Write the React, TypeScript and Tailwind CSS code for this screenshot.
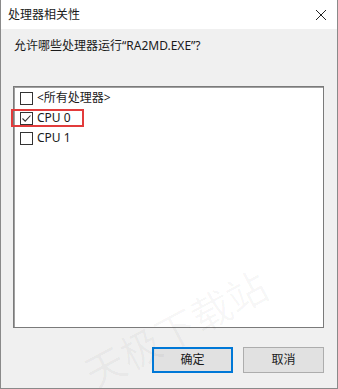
import { useState } from "react";

const processors = [
  { label: "<所有处理器>", checked: false },
  { label: "CPU 0", checked: true },
  { label: "CPU 1", checked: false },
];

const font = { fontFamily: '"Noto Sans", "Noto Sans CJK SC", sans-serif' };

const Checkbox = ({ checked }: { checked: boolean }) => (
  <span className="w-[13px] h-[13px] border border-[#333333] bg-white flex items-center justify-center shrink-0">
    {checked && (
      <svg width="11" height="11" viewBox="0 0 11 11" fill="none">
        <path d="M1.5 5.5 4.2 8.2 9.5 2.5" stroke="#333333" strokeWidth="1.1" />
      </svg>
    )}
  </span>
);

const App = () => {
  const [items, setItems] = useState(processors);

  const toggle = (i: number) =>
    setItems(items.map((it, idx) => (idx === i ? { ...it, checked: !it.checked } : it)));

  return (
    <div
      className="relative w-[338px] h-[389px] flex flex-col border-x border-b border-[#8a8a8a] overflow-hidden text-[12px] text-[#1a1a1a]"
      style={font}
    >
      {/* title bar */}
      <div className="h-[29px] bg-white flex items-center justify-between pl-[7px] pr-[10px] shrink-0">
        <span className="leading-4">处理器相关性</span>
        <svg width="12" height="12" viewBox="0 0 12 12" fill="none">
          <path d="M1 1 11 11M11 1 1 11" stroke="#222222" strokeWidth="1" />
        </svg>
      </div>

      <div className="flex-1 bg-[#f0f0f0] flex flex-col pt-[9px] pl-[12px] pr-[13px] pb-[15px]">
        <p className="leading-4 pl-[1px]">允许哪些处理器运行“RA2MD.EXE”?</p>

        <div className="mt-[32px] h-[242px] bg-white border border-[#7a7a7a] shadow-[inset_1px_1px_0_#a0a0a0] pt-[1px] pl-[6px]">
          {items.map((it, i) => (
            <div key={i} className="h-5 flex items-center gap-[4px]" onClick={() => toggle(i)}>
              <Checkbox checked={it.checked} />
              <span className="leading-4">{it.label}</span>
            </div>
          ))}
        </div>

        <div className="mt-[19px] flex justify-end gap-[10px]">
          <button className="w-[81px] h-[26px] bg-[#e1e1e1] border-2 border-[#0078d7] leading-4">确定</button>
          <button className="w-[81px] h-[26px] bg-[#e1e1e1] border border-[#adadad] leading-4">取消</button>
        </div>
      </div>

      {/* highlight around CPU 0 */}
      <div className="absolute left-[10px] top-[109px] w-[73px] h-[18px] border-2 border-[#e23b3b] pointer-events-none" />

      {/* watermarks */}
      <div className="absolute left-[70px] top-[80px] text-[40px] leading-none text-black/[0.025] -rotate-[28deg] pointer-events-none whitespace-nowrap">
        天极下载站
      </div>
      <div className="absolute left-[75px] top-[310px] text-[40px] leading-none text-black/[0.035] -rotate-[28deg] pointer-events-none whitespace-nowrap">
        天极下载站
      </div>
    </div>
  );
};

export default App;
